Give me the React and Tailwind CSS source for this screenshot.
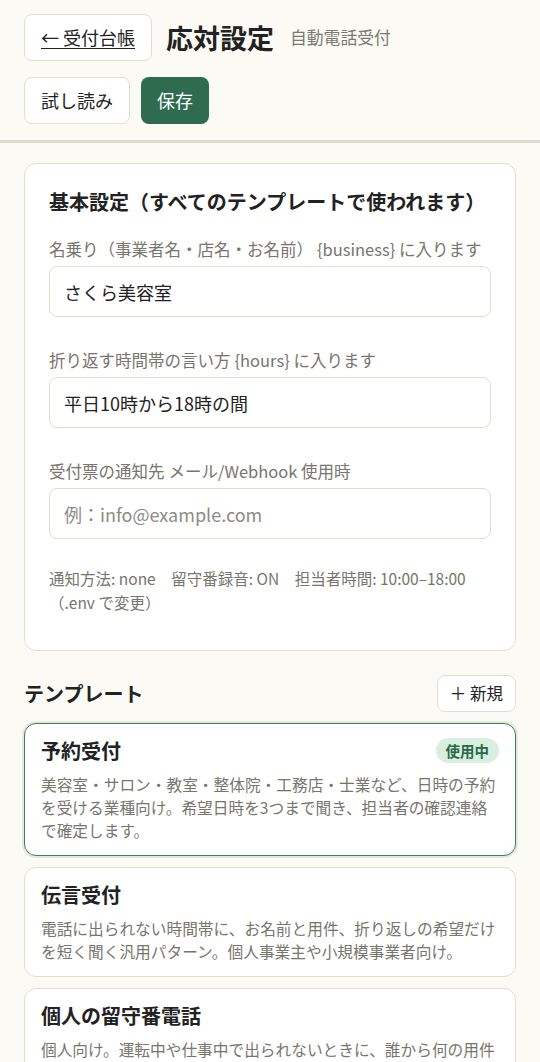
const templates = [
  {
    id: "reserve",
    name: "予約受付",
    active: true,
    desc: "美容室・サロン・教室・整体院・工務店・士業など、日時の予約を受ける業種向け。希望日時を3つまで聞き、担当者の確認連絡で確定します。",
  },
  {
    id: "message",
    name: "伝言受付",
    desc: "電話に出られない時間帯に、お名前と用件、折り返しの希望だけを短く聞く汎用パターン。個人事業主や小規模事業者向け。",
  },
  {
    id: "personal",
    name: "個人の留守番電話",
    desc: "個人向け。運転中や仕事中で出られないときに、誰から何の用件かを聞いて、あとで折り返せるように残します。",
  },
];

function Field({ label, hint, value, placeholder }) {
  return (
    <div>
      <label className="block text-[16.5px] leading-[22px] text-[#77756d]">
        {label}
        {hint && <span className="ml-1">{hint}</span>}
      </label>
      <input
        defaultValue={value}
        placeholder={placeholder}
        className="mt-[6px] block h-[51px] w-full rounded-lg border border-[#e2ddd0] bg-white px-[14px] text-[18px] text-[#222] placeholder:text-[#8d8b84] outline-none"
      />
    </div>
  );
}

export default function App() {
  return (
    <div
      className="min-h-[1062px] bg-[#fbfaf5] text-[#222]"
      style={{ fontFamily: '"Noto Sans CJK JP", "Noto Sans", sans-serif' }}
    >
      <header className="border-b-[3px] border-[#e1dbcd] px-6 pt-[14px] pb-4">
        <div className="flex items-center">
          <button className="h-[47px] rounded-lg border border-[#e2ddd0] bg-white px-4 text-[18px] underline underline-offset-[3px]">
            ← 受付台帳
          </button>
          <h1 className="ml-[14px] text-[27px] font-bold leading-none">応対設定</h1>
          <span className="ml-4 text-[16.8px] text-[#7b7971]">自動電話受付</span>
        </div>
        <div className="mt-4 flex gap-[11px]">
          <button className="h-[47px] rounded-lg border border-[#e2ddd0] bg-white px-4 text-[18px]">
            試し読み
          </button>
          <button className="h-[47px] rounded-lg bg-[#2e6b4f] px-4 text-[18px] text-white">
            保存
          </button>
        </div>
      </header>

      <main className="px-6 pt-5">
        <section className="rounded-xl border border-[#e2ddd0] bg-white px-6 pt-6 pb-9">
          <h2 className="text-[20px] font-bold leading-[27px]">
            基本設定（すべてのテンプレートで使われます）
          </h2>
          <div className="mt-[23px] flex flex-col gap-8">
            <Field label="名乗り（事業者名・店名・お名前）" hint="{business} に入ります" value="さくら美容室" />
            <Field label="折り返す時間帯の言い方" hint="{hours} に入ります" value="平日10時から18時の間" />
            <Field label="受付票の通知先" hint="メール/Webhook 使用時" placeholder="例：info@example.com" />
          </div>
          <p className="mt-[27px] text-[15.5px] leading-6 text-[#77756d]">
            通知方法: none　留守番録音: ON　担当者時間: 10:00–18:00（.env で変更）
          </p>
        </section>

        <div className="mt-6 flex items-center justify-between">
          <h2 className="text-[20px] font-bold">テンプレート</h2>
          <button className="h-[37px] rounded-lg border border-[#e2ddd0] bg-white px-3 text-[16.5px]">
            ＋ 新規
          </button>
        </div>

        <div className="mt-[11px] flex flex-col gap-[11px]">
          {templates.map((t) => (
            <div
              key={t.id}
              className={`rounded-xl border bg-white px-4 py-[13px] ${
                t.active
                  ? "border-[#3f7b5e] shadow-[0_0_0_2px_rgba(63,123,94,0.12)]"
                  : "border-[#e2ddd0]"
              }`}
            >
              <div className="flex items-center justify-between">
                <h3 className="text-[20px] font-bold leading-[27px]">{t.name}</h3>
                {t.active && (
                  <span className="rounded-full bg-[#d9efe0] px-[10px] text-[14.5px] font-bold leading-[25px] text-[#28694a]">
                    使用中
                  </span>
                )}
              </div>
              <p className="mt-[9px] text-[15.7px] leading-[23px] text-[#77756d]">{t.desc}</p>
            </div>
          ))}
        </div>
      </main>
    </div>
  );
}
